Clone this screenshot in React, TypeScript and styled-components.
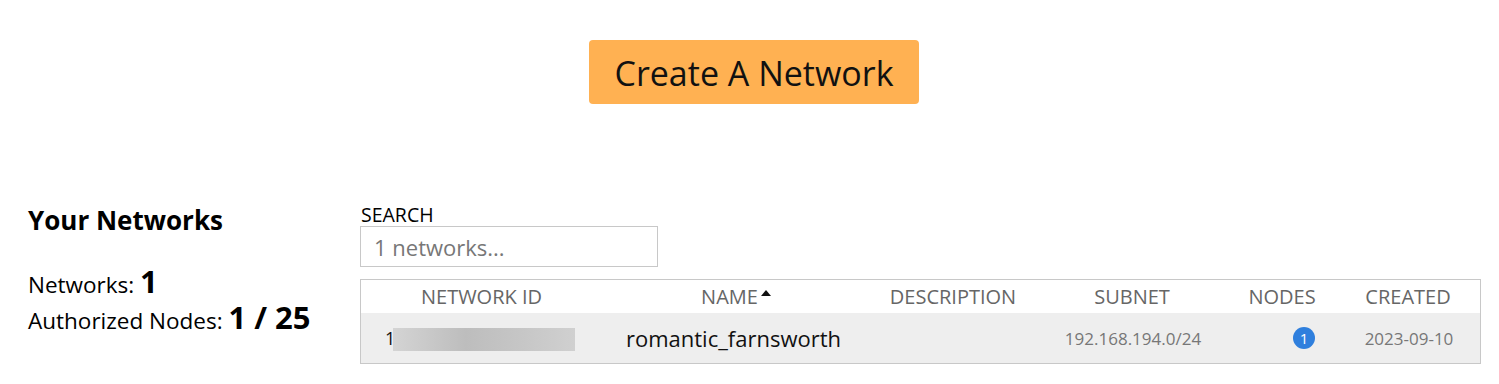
import styled, { createGlobalStyle } from 'styled-components';

const GlobalStyle = createGlobalStyle`
	body {
		margin: 0;
		background: #ffffff;
		font-family: 'Open Sans', 'Noto Sans', sans-serif;
		color: #000000;
	}
`;

const columns = ['NETWORK ID', 'NAME', 'DESCRIPTION', 'SUBNET', 'NODES', 'CREATED'];

export default function App() {
	return (
		<>
			<GlobalStyle />
			<Page>
				<Top>
					<CreateButton>Create A Network</CreateButton>
				</Top>
				<Main>
					<Summary>
						<Heading>Your Networks</Heading>
						<Stat>
							Networks: <b>1</b>
						</Stat>
						<Stat>
							Authorized Nodes: <b>1 / 25</b>
						</Stat>
					</Summary>
					<ListArea>
						<SearchLabel>SEARCH</SearchLabel>
						<SearchInput placeholder="1 networks..." />
						<Table>
							<HeaderRow>
								{columns.map((c) => (
									<HeadCell key={c}>
										{c}
										{c === 'NAME' && <SortArrow />}
									</HeadCell>
								))}
							</HeaderRow>
							<DataRow>
								<IdCell>
									1<Blur />
								</IdCell>
								<NameCell>romantic_farnsworth</NameCell>
								<Cell />
								<Cell>192.168.194.0/24</Cell>
								<NodesCell>
									<Badge>1</Badge>
								</NodesCell>
								<Cell>2023-09-10</Cell>
							</DataRow>
						</Table>
					</ListArea>
				</Main>
			</Page>
		</>
	);
}

const Page = styled.div`
	width: 1499px;
	height: 384px;
	display: flex;
	flex-direction: column;
`;

const Top = styled.div`
	height: 150px;
	box-sizing: border-box;
	padding-top: 40px;
	display: flex;
	justify-content: center;
`;

const CreateButton = styled.button`
	width: 330px;
	height: 64px;
	margin-left: 9px;
	background: #ffb152;
	border: none;
	border-radius: 4px;
	font-family: 'Open Sans', sans-serif;
	font-size: 34px;
	color: #111111;
	padding: 2px 0 0;
`;

const Main = styled.div`
	display: flex;
	padding-left: 28px;
	padding-top: 54px;
`;

const Summary = styled.div`
	width: 332px;
	display: flex;
	flex-direction: column;
`;

const Heading = styled.h3`
	margin: 0 0 29px;
	font-size: 26px;
	font-weight: 700;
	line-height: 32px;
`;

const Stat = styled.div`
	font-size: 22.5px;
	line-height: 32px;

	b {
		font-size: 31px;
		font-weight: 700;
	}
`;

const ListArea = styled.div`
	width: 1121px;
	display: flex;
	flex-direction: column;
`;

const SearchLabel = styled.label`
	font-size: 19.5px;
	line-height: 22px;
	padding-left: 1px;
`;

const SearchInput = styled.input`
	width: 298px;
	height: 41px;
	box-sizing: border-box;
	border: 1px solid #c8c8c8;
	padding: 0 13px;
	font-family: 'Open Sans', sans-serif;
	font-size: 22px;
	outline: none;

	&::placeholder {
		color: #777777;
	}
`;

const Table = styled.div`
	margin-top: 12px;
	border: 1px solid #c8c8c8;
	display: flex;
	flex-direction: column;
`;

const grid = `
	display: grid;
	grid-template-columns: 241px 268px 166px 192px 108px 1fr;
	align-items: center;
`;

const HeaderRow = styled.div`
	${grid}
	height: 33px;
`;

const HeadCell = styled.div`
	text-align: center;
	color: #666666;
	font-size: 20px;
	display: flex;
	justify-content: center;
	align-items: center;
`;

const SortArrow = styled.span`
	display: inline-block;
	width: 0;
	height: 0;
	margin-left: 3px;
	margin-top: -8px;
	border-left: 5px solid transparent;
	border-right: 5px solid transparent;
	border-bottom: 6px solid #111111;
`;

const DataRow = styled.div`
	${grid}
	height: 50px;
	background: #eeeeee;
`;

const Cell = styled.div`
	text-align: center;
	color: #777777;
	font-size: 17px;
	padding-left: 2px;
`;

const IdCell = styled.div`
	display: flex;
	align-items: center;
	padding-left: 24px;
	font-size: 18px;
	color: #111111;
`;

const Blur = styled.span`
	display: inline-block;
	width: 182px;
	height: 23px;
	margin-left: -2px;
	margin-top: 3px;
	background: linear-gradient(90deg, #d4d4d4 0%, #bdbdbd 40%, #c6c6c6 70%, #d0d0d0 100%);
`;

const NameCell = styled.div`
	text-align: center;
	font-size: 22px;
	color: #111111;
	padding-right: 5px;
`;

const NodesCell = styled.div`
	display: flex;
	justify-content: flex-end;
	padding-right: 21px;
`;

const Badge = styled.span`
	width: 22px;
	height: 22px;
	border-radius: 50%;
	background: #2f7fdd;
	color: #ffffff;
	font-size: 15px;
	display: flex;
	align-items: center;
	justify-content: center;
`;
